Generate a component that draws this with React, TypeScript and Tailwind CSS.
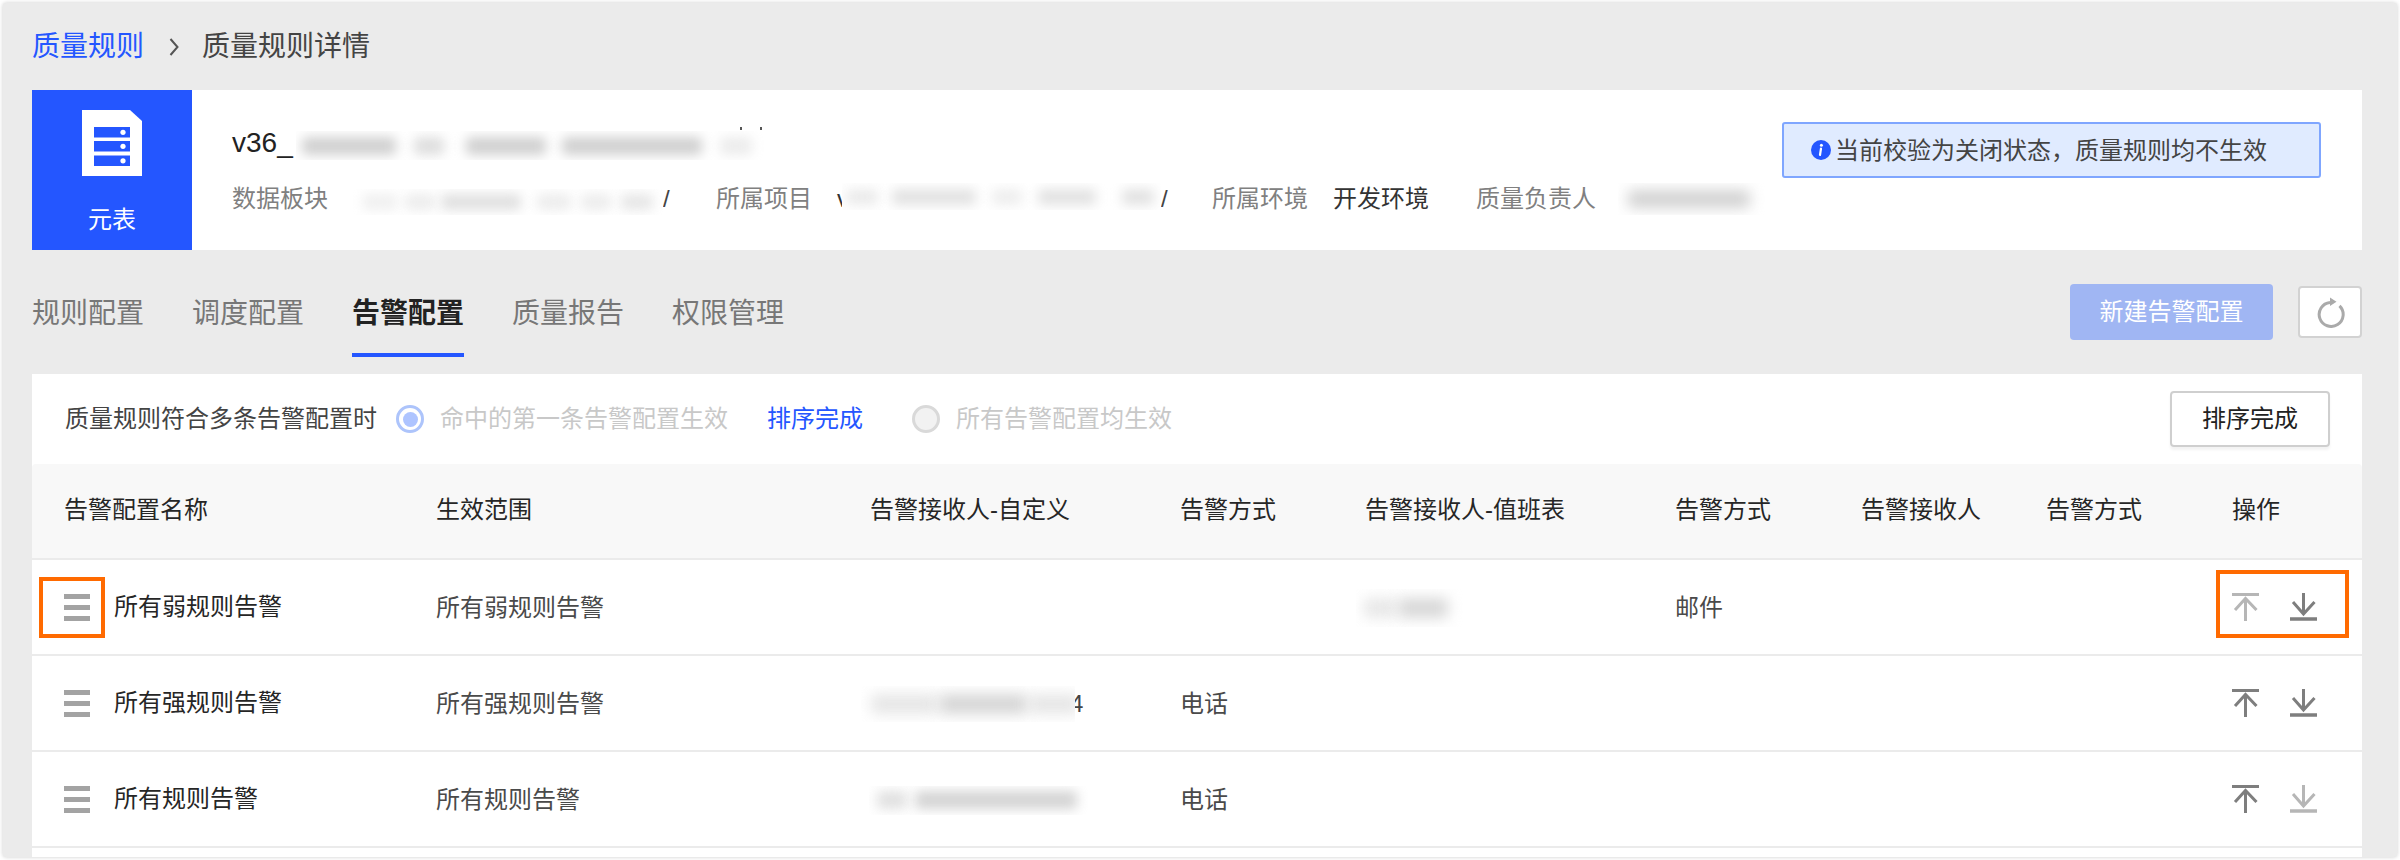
import React from "react";

const FONT = "font-['Liberation_Sans','Noto_Sans_CJK_SC',sans-serif]";

function BlurBlock({ className, segs, bar }: { className: string; segs: string[]; bar: string }) {
  return (
    <div className={`relative z-10 flex shrink-0 items-center overflow-hidden bg-white ${className}`}>
      {segs.map((s, i) => (
        <span key={i} className={`shrink-0 rounded-sm ${bar} ${s}`} />
      ))}
    </div>
  );
}

function ArrowUp({ muted }: { muted?: boolean }) {
  return (
    <svg width="27" height="28" viewBox="0 0 27 28" fill="none" stroke={muted ? "#b6b6b6" : "#7e7e7e"} strokeWidth="3">
      <path d="M0 1.5H27" />
      <path d="M13.5 28V6" />
      <path d="M3 17L13.5 5.5L24.5 17" />
    </svg>
  );
}

function ArrowDown({ muted }: { muted?: boolean }) {
  return (
    <svg width="27" height="28" viewBox="0 0 27 28" fill="none" stroke={muted ? "#b6b6b6" : "#7e7e7e"} strokeWidth="3">
      <path d="M0 26H27" strokeWidth="3.5" />
      <path d="M13.5 0V21" />
      <path d="M3 9L13.5 21L24.5 9" />
    </svg>
  );
}

function Handle() {
  return (
    <div className="flex w-[26px] shrink-0 flex-col gap-[6px]">
      <span className="h-[5px] bg-[#a3a3a3]" />
      <span className="h-[5px] bg-[#a3a3a3]" />
      <span className="h-[5px] bg-[#a3a3a3]" />
    </div>
  );
}

const GRID =
  "grid grid-cols-[372px_434px_310px_185px_310px_186px_185px_186px_162px]";

const HEADERS = [
  "告警配置名称",
  "生效范围",
  "告警接收人-自定义",
  "告警方式",
  "告警接收人-值班表",
  "告警方式",
  "告警接收人",
  "告警方式",
  "操作",
];

function Row({
  name,
  recipient,
  method,
  dutyBlur,
  dutyMethod,
  upMuted,
  downMuted,
  marked,
}: {
  name: string;
  recipient?: React.ReactNode;
  method?: string;
  dutyBlur?: React.ReactNode;
  dutyMethod?: string;
  upMuted?: boolean;
  downMuted?: boolean;
  marked?: boolean;
}) {
  const cell = "flex h-[94px] items-center pl-[32px] text-[#4a4a4a] pt-[2px]";
  return (
    <div className={`${GRID} border-b-2 border-[#ebebeb]`}>
      <div className="relative flex h-[94px] items-center gap-[24px] pl-[32px] text-[#262626]">
        <Handle />
        <span className="mb-[1px]">{name}</span>
        {marked && (
          <div className="absolute left-[7px] top-[17px] h-[61px] w-[66px] border-4 border-[#ff6a00]" />
        )}
      </div>
      <div className={cell}>{name}</div>
      <div className={cell}>{recipient}</div>
      <div className={cell}>{method}</div>
      <div className={cell}>{dutyBlur}</div>
      <div className={cell}>{dutyMethod}</div>
      <div className={cell} />
      <div className={cell} />
      <div className="relative flex h-[94px] items-center gap-[31px] pl-[32px]">
        <ArrowUp muted={upMuted} />
        <ArrowDown muted={downMuted} />
        {marked && (
          <div className="absolute left-[16px] top-[10px] h-[68px] w-[133px] border-4 border-[#ff6a00]" />
        )}
      </div>
    </div>
  );
}

export default function App() {
  return (
    <div className={`h-[860px] w-[2400px] overflow-hidden bg-white p-[3px] text-[24px] leading-[40px] ${FONT}`}>
      <div className="h-[854px] w-[2394px] overflow-hidden rounded-[3px] bg-[#ebebeb] pl-[29px] pr-[35px] shadow-[0_0_4px_rgba(0,0,0,0.2)]">
        {/* Breadcrumb */}
        <div className="flex h-[87px] items-center text-[28px]">
          <span className="text-[#2456ff]">质量规则</span>
          <svg className="ml-[25px] mr-[23px]" width="10" height="20" viewBox="0 0 10 20" fill="none" stroke="#555" strokeWidth="2">
            <path d="M1.5 2L8.5 10L1.5 18" />
          </svg>
          <span className="text-[#444]">质量规则详情</span>
        </div>

        {/* Header card */}
        <div className="flex h-[160px] bg-white">
          <div className="flex w-[160px] shrink-0 flex-col items-center bg-[#2456ff] pt-[20px] text-white">
            <svg width="60" height="66" viewBox="0 0 60 66">
              <path d="M0 0H48L60 11V66H0Z" fill="#fff" />
              <rect x="12" y="17" width="36" height="10.5" fill="#2456ff" />
              <rect x="12" y="31" width="36" height="10.5" fill="#2456ff" />
              <rect x="12" y="45.5" width="36" height="10.5" fill="#2456ff" />
              <circle cx="41" cy="22.3" r="2.6" fill="#fff" />
              <circle cx="41" cy="36.3" r="2.6" fill="#fff" />
              <circle cx="41" cy="50.8" r="2.6" fill="#fff" />
            </svg>
            <span className="mt-[24px]">元表</span>
          </div>
          <div className="flex min-w-0 flex-1 flex-col gap-[16px] pl-[40px] pt-[33px]">
            <div className="relative flex h-[40px] items-center text-[28px] text-[#222]">
              <span className="shrink-0 whitespace-nowrap">v36_</span>
              <BlurBlock
                className="ml-[3px] mt-[5px] h-[29px] w-[479px]"
                bar="h-[18px] bg-[#d0d0d0] blur-[6px]"
                segs={[
                  "ml-[6px] w-[94px]",
                  "ml-[18px] w-[30px] opacity-70",
                  "ml-[22px] w-[80px]",
                  "ml-[16px] w-[140px]",
                  "ml-[18px] w-[32px] opacity-40",
                ]}
              />
              <span className="absolute left-[508px] top-[4px] h-[3px] w-[2px] bg-[#555]" />
              <span className="absolute left-[528px] top-[4px] h-[3px] w-[2px] bg-[#555]" />
            </div>
            <div className="flex h-[40px] items-center whitespace-nowrap text-[#808080]">
              <span className="w-[96px] shrink-0">数据板块</span>
              <BlurBlock
                className="ml-[25px] mt-[6px] h-[26px] w-[310px]"
                bar="h-[16px] bg-[#e0e0e0] blur-[6px]"
                segs={[
                  "ml-[10px] w-[34px] opacity-50",
                  "ml-[8px] w-[30px] opacity-60",
                  "ml-[6px] w-[80px]",
                  "ml-[16px] w-[34px] opacity-60",
                  "ml-[10px] w-[30px] opacity-60",
                  "ml-[10px] w-[32px] opacity-80",
                ]}
              />
              <span className="w-[53px] shrink-0 text-[#444]">/</span>
              <span className="w-[96px] shrink-0">所属项目</span>
              <span className="ml-[25px] w-[5px] shrink-0 whitespace-nowrap text-[#333]">v</span>
              <BlurBlock
                className="mb-[5px] h-[27px] w-[319px]"
                bar="h-[16px] bg-[#e2e2e2] blur-[6px]"
                segs={[
                  "ml-[4px] w-[32px] opacity-70",
                  "ml-[14px] w-[84px]",
                  "ml-[16px] w-[30px] opacity-60",
                  "ml-[16px] w-[58px]",
                  "ml-[26px] w-[32px]",
                ]}
              />
              <span className="w-[51px] shrink-0 text-[#444]">/</span>
              <span className="w-[96px] shrink-0">所属环境</span>
              <span className="ml-[25px] w-[96px] shrink-0 text-[#333]">开发环境</span>
              <span className="ml-[47px] w-[120px] shrink-0">质量负责人</span>
              <BlurBlock
                className="ml-[22px] h-[32px] w-[160px]"
                bar="h-[18px] bg-[#d2d2d2] blur-[7px]"
                segs={["ml-[10px] w-[122px]"]}
              />
            </div>
          </div>
          <div className="mr-[41px] mt-[32px] flex h-[56px] w-[539px] shrink-0 items-center gap-[4px] rounded-[3px] border-2 border-[#7fa6ff] bg-[#e0ebff] pl-[27px] text-[#444]">
            <svg width="20" height="20" viewBox="0 0 20 20">
              <circle cx="10" cy="10" r="10" fill="#2456ff" />
              <circle cx="10.4" cy="5.3" r="1.5" fill="#fff" />
              <path d="M10 8.5L9 15" stroke="#fff" strokeWidth="2.2" strokeLinecap="round" />
            </svg>
            <span className="whitespace-nowrap pt-[2px]">当前校验为关闭状态，质量规则均不生效</span>
          </div>
        </div>

        {/* Tabs */}
        <div className="flex h-[124px] items-start justify-between">
          <div className="flex gap-[48px] pt-[44px] text-[28px] text-[#777]">
            <div className="w-[112px] whitespace-nowrap">规则配置</div>
            <div className="w-[112px] whitespace-nowrap">调度配置</div>
            <div className="w-[112px] whitespace-nowrap border-b-4 border-[#2456ff] pb-[19px] font-semibold text-[#222]">告警配置</div>
            <div className="w-[112px] whitespace-nowrap">质量报告</div>
            <div className="w-[112px] whitespace-nowrap">权限管理</div>
          </div>
          <div className="flex items-center gap-[25px] pt-[34px]">
            <div className="flex h-[56px] w-[203px] items-center justify-center rounded-[4px] bg-[#a0b6f3] text-white">新建告警配置</div>
            <div className="flex h-[52px] w-[64px] items-center justify-center rounded-[4px] border-2 border-[#d2d2d2] bg-white">
              <svg width="30" height="32" viewBox="0 0 30 32" fill="none">
                <path d="M24.5 9.8A12 12 0 1 1 15 6.5" stroke="#aaa" strokeWidth="3" />
                <path d="M15 1.5L21.5 5.8L15 10Z" fill="#aaa" />
              </svg>
            </div>
          </div>
        </div>

        {/* Table card */}
        <div className="h-[483px] bg-white">
          <div className="flex h-[90px] items-center pl-[33px] pr-[32px]">
            <span className="w-[331px] whitespace-nowrap text-[#444]">质量规则符合多条告警配置时</span>
            <span className="flex h-[28px] w-[28px] items-center justify-center rounded-full border-[3px] border-[#adc4fb]">
              <span className="h-[15px] w-[15px] rounded-full bg-[#aec4ff]" />
            </span>
            <span className="ml-[16px] w-[327px] whitespace-nowrap text-[#c8c8c8]">命中的第一条告警配置生效</span>
            <span className="w-[145px] whitespace-nowrap text-[#2456ff]">排序完成</span>
            <span className="h-[28px] w-[28px] rounded-full border-[3px] border-[#d9d9d9] bg-[#f2f2f2]" />
            <span className="ml-[16px] whitespace-nowrap text-[#c8c8c8]">所有告警配置均生效</span>
            <div className="ml-auto flex h-[56px] w-[160px] items-center justify-center rounded-[4px] border-2 border-[#cfcfcf] text-[#222] shadow-[0_3px_3px_rgba(0,0,0,0.05)]">
              排序完成
            </div>
          </div>
          <div className={`${GRID} h-[96px] rounded-t-[4px] border-b-2 border-[#ebebeb] bg-[#f8f8f8]`}>
            {HEADERS.map((h, i) => (
              <div key={i} className="flex items-center whitespace-nowrap pl-[32px] pb-[2px] text-[#262626]">
                {h}
              </div>
            ))}
          </div>
          <Row
            marked
            upMuted
            name="所有弱规则告警"
            dutyBlur={
              <BlurBlock
                className="-ml-[9px] h-[38px] w-[107px]"
                bar="h-[20px] bg-[#d8d8d8] blur-[7px]"
                segs={["ml-[8px] w-[32px] opacity-60", "ml-[2px] w-[50px]"]}
              />
            }
            dutyMethod="邮件"
          />
          <Row
            name="所有强规则告警"
            recipient={
              <>
                <BlurBlock
                  className="-ml-[9px] h-[36px] w-[214px]"
                  bar="h-[20px] bg-[#d6d6d6] blur-[7px]"
                  segs={["ml-[10px] w-[66px] opacity-60", "ml-[2px] w-[88px]", "ml-[2px] w-[50px] opacity-60"]}
                />
                <span className="-ml-[5px] shrink-0 text-[#444]">4</span>
              </>
            }
            method="电话"
          />
          <Row
            downMuted
            name="所有规则告警"
            recipient={
              <BlurBlock
                className="-ml-[1px] h-[29px] w-[219px]"
                bar="h-[18px] bg-[#d4d4d4] blur-[6px]"
                segs={["ml-[8px] w-[30px] opacity-70", "ml-[8px] w-[162px]"]}
              />
            }
            method="电话"
          />
        </div>
      </div>
    </div>
  );
}
